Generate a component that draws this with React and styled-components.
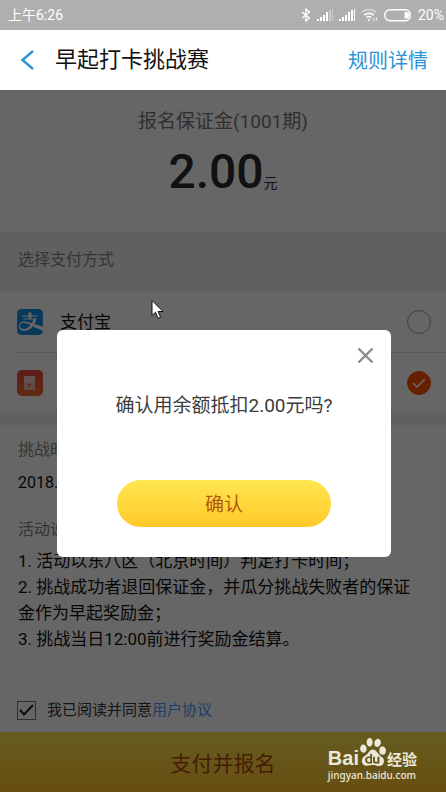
import React from "react";
import styled, { createGlobalStyle } from "styled-components";
import { SiAlipay, SiBaidu } from "react-icons/si";

const GlobalStyle = createGlobalStyle`
  *, *::before, *::after { box-sizing: border-box; }
  body { margin: 0; background: #fff; }
  button, input { font: inherit; margin: 0; padding: 0; border: 0; }
  button { background: none; cursor: pointer; }
  h1, h2, p, ol { margin: 0; padding: 0; font-weight: 400; }
  a { text-decoration: none; }
`;

const Screen = styled.div`
  position: relative;
  display: flex;
  flex-direction: column;
  min-height: 100vh;
  font-family: Roboto, "Noto Sans CJK SC", sans-serif;
  font-weight: 400;
  color: #111;
`;

const StatusBar = styled.div`
  display: flex;
  align-items: center;
  justify-content: space-between;
  height: 30px;
  padding: 0 2px 0 8px;
  background: #afafaf;
  color: #fff;
  font-size: 14px;
  line-height: 20px;
`;

const StatusIcons = styled.div`
  display: flex;
  align-items: center;
  gap: 6px;
`;

const Header = styled.header`
  display: flex;
  align-items: center;
  height: 60px;
  padding: 0 18px 0 20px;
  background: #fff;
`;

const BackButton = styled.button`
  display: flex;
  width: 15px;
  margin-right: 20px;
`;

const Title = styled.h1`
  flex: 1;
  font-size: 22px;
  line-height: 32px;
`;

const RulesLink = styled.a`
  padding-top: 2px;
  color: #2a93d6;
  font-size: 20px;
  line-height: 30px;
`;

const Body = styled.div`
  position: relative;
  flex: 1;
  display: flex;
  flex-direction: column;
`;

const Page = styled.main`
  flex: 1;
  display: flex;
  flex-direction: column;
`;

const Hero = styled.section`
  padding: 18px 0 32px;
  text-align: center;
`;

const HeroLabel = styled.p`
  color: #777;
  font-size: 19px;
  line-height: 28px;
`;

const Price = styled.p`
  margin-top: 8px;
  color: #2c2c2c;
  font-size: 48px;
  font-weight: 500;
  line-height: 56px;
`;

const Unit = styled.span`
  font-size: 14px;
  font-weight: 400;
  line-height: 14px;
`;

const SectionTitle = styled.h2`
  padding: 16px 18px 20px;
  background: #efeff4;
  color: #868686;
  font-size: 16px;
  line-height: 24px;
`;

const PayList = styled.div`
  padding-left: 17px;
  border-bottom: 12px solid #f1f1f4;
`;

const PayRow = styled.label`
  display: flex;
  align-items: center;
  gap: 17px;
  height: ${(p) => (p.$divided ? "61px" : "60px")};
  padding-right: 15px;
  border-bottom: ${(p) => (p.$divided ? "1px solid #dcdcdc" : "0")};
  font-size: 17px;
  line-height: 26px;
`;

const PayName = styled.span`
  flex: 1;
`;

const AlipayMark = styled.span`
  display: flex;
  border-radius: 5px;
  background: #fff;
  color: #1590e9;
`;

const Stack = styled.span`
  display: grid;
  place-items: center;
  & > * { grid-area: 1 / 1; }
  & > svg { pointer-events: none; }
`;

const Radio = styled.input`
  appearance: none;
  width: 24px;
  height: 24px;
  border: 1px solid #999;
  border-radius: 50%;
  &:checked { border-color: #ff5000; background: #ff5000; }
  & + svg { visibility: hidden; }
  &:checked + svg { visibility: visible; }
`;

const Info = styled.section`
  padding: 13px 24px 0 18px;
`;

const InfoLabel = styled.h2`
  margin-top: ${(p) => (p.$spaced ? "22px" : "0")};
  color: #868686;
  font-size: 16px;
  line-height: 24px;
`;

const InfoDate = styled.p`
  margin-top: 8px;
  font-size: 16px;
  line-height: 26px;
`;

const Rules = styled.div`
  margin-top: 6px;
  font-size: 17px;
  line-height: 26px;
`;

const Agreement = styled.div`
  display: flex;
  align-items: center;
  gap: 11px;
  margin-top: auto;
  padding: 16px 18px 12px 17px;
  color: #333;
  font-size: 15px;
  line-height: 20px;
`;

const Checkbox = styled.input`
  appearance: none;
  width: 19px;
  height: 19px;
  border: 1px solid #777;
  & + svg { visibility: hidden; }
  &:checked + svg { visibility: visible; }
`;

const AgreementLink = styled.a`
  color: #4a9cff;
`;

const PayButton = styled.button`
  width: 100%;
  height: 60px;
  padding-top: 4px;
  background: linear-gradient(#ffe650, #ffc428);
  color: #b04a10;
  font-size: 21px;
  line-height: 30px;
`;

const Overlay = styled.div`
  position: absolute;
  inset: 0;
  display: flex;
  align-items: center;
  justify-content: center;
  padding: 5px 55px 0 57px;
  background: rgba(0, 0, 0, 0.6);
`;

const Dialog = styled.div`
  display: flex;
  flex-direction: column;
  align-items: center;
  width: 100%;
  max-width: 360px;
  padding: 17px 17px 30px;
  border-radius: 6px;
  background: #fff;
`;

const CloseButton = styled.button`
  display: flex;
  align-self: flex-end;
`;

const Message = styled.p`
  margin: 28px 0 60px;
  color: #3c3c3c;
  font-size: 19px;
  line-height: 28px;
`;

const ConfirmButton = styled.button`
  width: 214px;
  height: 47px;
  padding-top: 2px;
  border-radius: 24px;
  background: linear-gradient(#ffe650, #ffc928);
  color: #b4570f;
  font-size: 19px;
  line-height: 28px;
`;

const Watermark = styled.div`
  position: absolute;
  right: 29px;
  bottom: 11px;
  color: #ece8dc;
`;

const WatermarkLogo = styled.div`
  display: flex;
  align-items: flex-end;
  height: 30px;
  margin-bottom: 1px;
  font: 700 20px/20px "Liberation Sans", sans-serif;
  & > svg { align-self: flex-start; }
`;

const WatermarkName = styled.span`
  font: 700 15px/18px "Noto Sans CJK SC", sans-serif;
`;

const WatermarkUrl = styled.div`
  font: 500 10px/12px "Noto Sans", sans-serif;
`;

const Pointer = styled.svg`
  position: absolute;
  left: 151px;
  top: 299px;
`;

function Signal({ fade }) {
  return (
    <svg width="16" height="12" viewBox="0 0 16 12" fill="#fff" aria-hidden="true">
      <rect x="0" y="10" width="2" height="2" />
      <rect x="3" y="8" width="2" height="4" />
      <rect x="6" y="6" width="2" height="6" />
      <rect x="9" y="3" width="2" height="9" />
      <rect x="12" y="1" width="2" height="11" opacity={fade ? 0.35 : 1} />
      <rect x="15" y="0" width="1" height="12" opacity={fade ? 0.35 : 1} />
    </svg>
  );
}

function Bluetooth() {
  return (
    <svg width="10" height="14" viewBox="0 0 10 14" fill="none" stroke="#fff" strokeWidth="1.3" aria-hidden="true">
      <path d="M1 4l7.500 6L4.800 13V1l3.700 3L1 10" />
    </svg>
  );
}

function Wifi() {
  return (
    <svg width="17" height="14" viewBox="0 0 17 14" fill="none" stroke="#fff" strokeWidth="1.500" aria-hidden="true">
      <path d="M.8 4.500a10 10 0 0 1 14.400 0" opacity=".5" />
      <path d="M3.200 7.200a6.700 6.700 0 0 1 9.600 0M5.600 9.600a3.500 3.500 0 0 1 4.800 0" />
      <circle cx="8" cy="12" r="1" fill="#fff" stroke="none" />
      <path d="M13 10v3M15.500 9.500v3" strokeWidth="1" opacity=".8" />
    </svg>
  );
}

function Battery() {
  return (
    <svg width="28" height="13" viewBox="0 0 28 13" aria-hidden="true">
      <rect x=".8" y=".8" width="25.500" height="11" rx="5" fill="none" stroke="#fff" strokeWidth="1.400" />
      <path d="M20.500 3H22a3.300 3.300 0 0 1 0 6.600h-1.500z" fill="#fff" />
    </svg>
  );
}

function BalanceIcon() {
  return (
    <svg width="26" height="26" viewBox="0 0 26 26" aria-hidden="true">
      <defs>
        <linearGradient id="balance" x1="0" y1="0" x2="0" y2="1">
          <stop offset="0" stopColor="#e8453c" />
          <stop offset="1" stopColor="#ef6a30" />
        </linearGradient>
      </defs>
      <rect width="26" height="26" rx="5" fill="url(#balance)" />
      <path d="M7 6h11v14H7z" fill="#f7b5a8" />
      <path d="M7 6h11v6l-5.500 2L7 12z" fill="#fbd3ca" />
      <circle cx="12.500" cy="14.500" r="1.300" fill="#e8553c" />
      <path d="M12.500 15v2.500" stroke="#e8553c" />
    </svg>
  );
}

export default function App() {
  return (
    <Screen>
      <GlobalStyle />
      <StatusBar>
        <span>上午6:26</span>
        <StatusIcons>
          <Bluetooth />
          <Signal fade />
          <Signal />
          <Wifi />
          <Battery />
          <span>20%</span>
        </StatusIcons>
      </StatusBar>
      <Header>
        <BackButton aria-label="返回">
          <svg width="15" height="20" viewBox="0 0 15 20" fill="none" stroke="#2a93d6" strokeWidth="2.400">
            <path d="M13 1L2.500 10 13 19" />
          </svg>
        </BackButton>
        <Title>早起打卡挑战赛</Title>
        <RulesLink href="#rules">规则详情</RulesLink>
      </Header>
      <Body>
        <Page>
          <Hero>
            <HeroLabel>报名保证金(1001期)</HeroLabel>
            <Price>
              2.00<Unit>元</Unit>
            </Price>
          </Hero>
          <SectionTitle>选择支付方式</SectionTitle>
          <PayList>
            <PayRow $divided>
              <AlipayMark>
                <SiAlipay size={26} />
              </AlipayMark>
              <PayName>支付宝</PayName>
              <Stack>
                <Radio type="radio" name="pay" />
              </Stack>
            </PayRow>
            <PayRow>
              <BalanceIcon />
              <PayName>余额</PayName>
              <Stack>
                <Radio type="radio" name="pay" defaultChecked />
                <svg width="14" height="10" viewBox="0 0 14 10" fill="none" stroke="#fff" strokeWidth="1.700">
                  <path d="M1 5l4 4 8-8" />
                </svg>
              </Stack>
            </PayRow>
          </PayList>
          <Info>
            <InfoLabel>挑战时间</InfoLabel>
            <InfoDate>2018.</InfoDate>
            <InfoLabel $spaced>活动说明</InfoLabel>
            <Rules>
              <p>1. 活动以东八区（北京时间）判定打卡时间；</p>
              <p>2. 挑战成功者退回保证金，并瓜分挑战失败者的保证金作为早起奖励金；</p>
              <p>3. 挑战当日12:00前进行奖励金结算。</p>
            </Rules>
          </Info>
          <Agreement>
            <Stack>
              <Checkbox type="checkbox" id="agree" defaultChecked />
              <svg width="15" height="12" viewBox="0 0 15 12" fill="none" stroke="#222" strokeWidth="2">
                <path d="M1 6l4 4.500L14 1" />
              </svg>
            </Stack>
            <span>
              <label htmlFor="agree">我已阅读并同意</label>
              <AgreementLink href="#terms">用户协议</AgreementLink>
            </span>
          </Agreement>
          <PayButton>支付并报名</PayButton>
        </Page>
        <Overlay>
          <Dialog role="dialog" aria-modal="true" aria-labelledby="confirm-message">
            <CloseButton aria-label="关闭">
              <svg width="17" height="17" viewBox="0 0 17 17" fill="none" stroke="#8c8c8c" strokeWidth="2.400">
                <path d="M1.500 1.500l14 14M15.500 1.500l-14 14" />
              </svg>
            </CloseButton>
            <Message id="confirm-message">确认用余额抵扣2.00元吗?</Message>
            <ConfirmButton>确认</ConfirmButton>
          </Dialog>
        </Overlay>
      </Body>
      <Watermark>
        <WatermarkLogo>
          <span>Bai</span>
          <SiBaidu size={28} />
          <WatermarkName>经验</WatermarkName>
        </WatermarkLogo>
        <WatermarkUrl>jingyan.baidu.com</WatermarkUrl>
      </Watermark>
      <Pointer width="13" height="21" viewBox="0 0 13 21" fill="#fff" stroke="#111" aria-hidden="true">
        <path d="M1 1.500v15l3.500-3.200 2.600 6 2.500-1.100L7 12.500h5z" />
      </Pointer>
    </Screen>
  );
}
